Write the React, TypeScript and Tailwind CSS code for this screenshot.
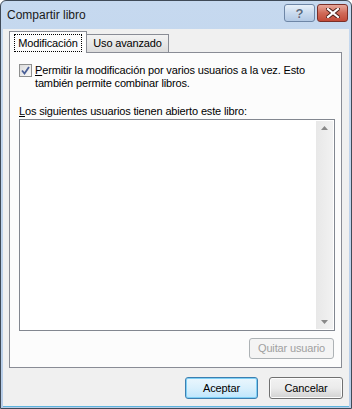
export default function App() {
  const font = { fontFamily: '"Liberation Sans", Arial, sans-serif' };
  return (
    <div className="w-[352px] h-[409px] bg-white" style={font}>
      <div className="w-[352px] h-[409px] flex flex-col border border-[#3f4a57] rounded-t-[6px] bg-gradient-to-b from-[#c6d9ef] to-[#b7cde8] overflow-hidden">
        {/* title bar */}
        <div className="h-[28px] flex items-center pl-[6px] pr-[3px] shrink-0">
          <span className="text-[12px] text-[#1a1a1a]">Compartir libro</span>
          <div className="ml-auto flex gap-[2px] self-start mt-[3px]">
            <div className="w-[31px] h-[18px] rounded-[3px] border border-[#6e86a6] bg-gradient-to-b from-[#e9f1fa] via-[#c9daee] to-[#b3c9e4] flex items-center justify-center">
              <span className="text-[13px] font-bold text-[#5a6a80] leading-none" style={{ textShadow: "0 0 1px #fff" }}>?</span>
            </div>
            <div className="w-[31px] h-[18px] rounded-[3px] border border-[#7a2f28] bg-gradient-to-b from-[#e6a89c] via-[#d06a58] to-[#c24a38] flex items-center justify-center">
              <svg width="14" height="10" viewBox="0 0 14 10">
                <path d="M2 1 L12 9 M12 1 L2 9" stroke="#4a1d18" strokeWidth="4" strokeLinecap="square" />
                <path d="M2 1 L12 9 M12 1 L2 9" stroke="#ffffff" strokeWidth="2.2" strokeLinecap="square" />
              </svg>
            </div>
          </div>
        </div>
        {/* client */}
        <div className="flex-1 mx-[2px] mb-[1px] bg-[#f0f0f0] flex flex-col border-b border-[#5eb4de] text-[11px] tracking-[-0.15px]">
          {/* tabs */}
          <div className="flex items-end h-[23px] pl-[6px]">
            <div className="relative z-10 h-[22px] w-[78px] border border-b-0 border-[#898c95] bg-[#fcfcfc] flex items-center justify-center -mb-px">
              <span className="text-black px-[3px] py-px outline outline-1 outline-dotted outline-black leading-[14px]">Modificación</span>
            </div>
            <div className="h-[18px] w-[82px] border border-b-0 border-l-0 border-[#898c95] bg-gradient-to-b from-[#f3f3f3] to-[#dcdcdc] flex items-center justify-center">
              <span className="text-black">Uso avanzado</span>
            </div>
          </div>
          {/* panel */}
          <div className="ml-[6px] w-[333px] h-[316px] border border-[#898c95] bg-[#fcfcfc] pt-[10px] pl-[9px] pr-[7px] flex flex-col">
            <div className="flex items-start gap-[3px]">
              <div className="w-[13px] h-[13px] border border-[#8e8f8f] bg-gradient-to-br from-[#dcdcdc] to-[#fafafa] p-[2px] shrink-0 mt-px">
                <svg width="9" height="9" viewBox="0 0 9 9" className="block -mt-px -ml-px">
                  <path d="M1 4.5 L3.5 7.5 L8 1" fill="none" stroke="#4a5f97" strokeWidth="1.8" />
                </svg>
              </div>
              <p className="leading-[13px] pt-px text-black whitespace-nowrap">
                <u>P</u>ermitir la modificación por varios usuarios a la vez. Esto
                <br />
                también permite combinar libros.
              </p>
            </div>
            <div className="mt-[14px] leading-[14px] text-black">
              <u>L</u>os siguientes usuarios tienen abierto este libro:
            </div>
            <div className="mt-[1px] w-[316px] h-[212px] border border-[#828790] bg-white flex justify-end p-px">
              <div className="w-[17px] h-full bg-gradient-to-r from-[#e8e8e8] to-[#f2f2f2] flex flex-col items-center justify-between py-[5px]">
                <svg width="7" height="4" viewBox="0 0 7 4"><path d="M0 4 L3.5 0 L7 4 Z" fill="#888" /></svg>
                <svg width="7" height="4" viewBox="0 0 7 4"><path d="M0 0 L3.5 4 L7 0 Z" fill="#888" /></svg>
              </div>
            </div>
            <div className="mt-[7px] flex justify-end">
              <div className="w-[85px] h-[21px] rounded-[3px] border border-[#adb2b5] bg-[#f4f4f4] flex items-center justify-center text-[#a0a0a0]">
                Quitar usuario
              </div>
            </div>
          </div>
          {/* bottom buttons */}
          <div className="flex justify-end gap-[11px] pr-[6px] mt-[9px]">
            <div className="w-[73px] h-[22px] rounded-[3px] border border-[#3c7fb1] bg-gradient-to-b from-[#eaf6fd] via-[#d9f0fc] to-[#bee6fd] flex items-center justify-center text-black shadow-[inset_0_0_0_1px_#7fd0f5]">
              Aceptar
            </div>
            <div className="w-[74px] h-[22px] rounded-[3px] border border-[#707070] bg-gradient-to-b from-[#f2f2f2] via-[#ebebeb] to-[#d2d2d2] flex items-center justify-center text-black shadow-[inset_0_0_0_1px_#fcfcfc]">
              Cancelar
            </div>
          </div>
        </div>
      </div>
    </div>
  );
}
